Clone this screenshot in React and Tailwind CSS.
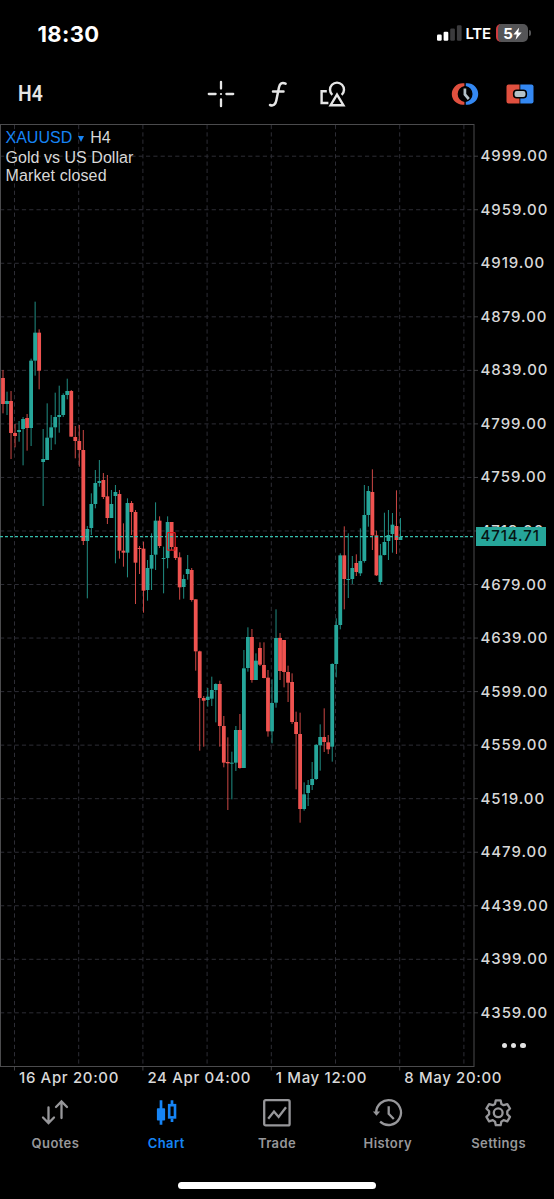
import clsx from 'clsx'

const UP = '#26a69a'
const DOWN = '#ef5350'
const STEP = 53.54

// [direction, high, body top, body bottom, low], three units per pixel below the segment top
const SEGMENTS = [
  {
    top: 290,
    bars: [
      ['d', 240, 264, 342, 370], ['u', 305, 333, 342, 375], ['d', 303, 333, 429, 507], ['d', 402, 429, 438, 472],
      ['u', 393, 420, 426, 455], ['u', 381, 387, 417, 526], ['d', 372, 384, 414, 482], ['u', 206, 212, 414, 468],
      ['u', 35, 128, 212, 257], ['d', 118, 128, 242, 298], ['u', 417, 507, 516, 648], ['u', 340, 443, 510, 510],
      ['u', 375, 412, 443, 480], ['u', 308, 381, 412, 463], ['u', 287, 375, 381, 428], ['u', 310, 315, 375, 381],
      ['u', 266, 303, 315, 328], ['d', 300, 303, 440, 440], ['d', 408, 441, 453, 505], ['d', 405, 453, 480, 530],
      ['d', 420, 480, 753, 765], ['u', 708, 717, 753, 925], ['u', 610, 642, 714, 735], ['u', 540, 579, 642, 655],
    ],
  },
  {
    top: 450,
    bars: [
      ['u', 30, 93, 99, 110], ['d', 69, 90, 141, 147], ['d', 75, 139, 204, 222], ['u', 120, 162, 204, 204],
      ['u', 105, 126, 138, 340], ['d', 120, 132, 302, 326], ['d', 220, 302, 308, 350], ['u', 145, 159, 308, 382],
      ['d', 153, 159, 186, 255], ['d', 180, 186, 338, 462], ['d', 288, 294, 297, 372], ['d', 275, 296, 422, 488],
      ['u', 330, 354, 420, 452], ['u', 250, 315, 356, 420], ['u', 157, 212, 314, 360], ['d', 199, 212, 288, 294],
      ['u', 290, 324, 327, 430], ['u', 199, 216, 324, 355], ['d', 216, 216, 291, 300], ['d', 290, 291, 324, 330],
      ['d', 307, 322, 412, 449], ['u', 374, 387, 411, 446], ['u', 315, 357, 372, 389], ['d', 354, 360, 450, 455],
    ],
  },
  {
    top: 490,
    bars: [
      ['d', 328, 328, 484, 542], ['d', 482, 484, 624, 782], ['d', 618, 624, 632, 770], ['u', 594, 620, 630, 650],
      ['u', 560, 600, 626, 648], ['u', 580, 582, 600, 697], ['d', 572, 582, 708, 770], ['d', 678, 708, 818, 832],
      ['d', 742, 816, 820, 960], ['u', 785, 818, 821, 928], ['u', 708, 720, 818, 843], ['d', 672, 720, 834, 836],
      ['u', 480, 535, 834, 834], ['u', 412, 441, 534, 545], ['d', 417, 441, 570, 578], ['u', 490, 512, 570, 570],
      ['d', 457, 474, 524, 528], ['d', 457, 525, 564, 565],
    ],
  },
  {
    top: 590,
    bars: [
      ['d', 240, 263, 424, 440], ['u', 268, 339, 424, 460], ['u', 58, 144, 338, 353], ['d', 129, 144, 243, 270],
      ['d', 150, 150, 246, 292], ['d', 227, 246, 278, 336], ['d', 250, 276, 396, 402], ['d', 365, 396, 432, 598],
      ['d', 368, 432, 657, 698], ['u', 577, 613, 657, 662], ['u', 570, 585, 609, 648], ['u', 516, 567, 585, 600],
      ['u', 462, 465, 567, 570], ['u', 403, 441, 466, 542], ['d', 355, 441, 456, 486], ['d', 435, 457, 478, 492],
      ['u', 220, 222, 470, 515], ['u', 85, 105, 222, 262],
    ],
  },
  {
    top: 460,
    bars: [
      ['u', 280, 286, 495, 508], ['d', 199, 286, 357, 448], ['u', 220, 357, 360, 414], ['u', 288, 324, 357, 372],
      ['d', 283, 309, 336, 348], ['u', 205, 303, 340, 348], ['u', 75, 165, 303, 308], ['u', 78, 93, 165, 200],
      ['d', 28, 96, 226, 270], ['d', 212, 226, 346, 348], ['u', 252, 286, 366, 374], ['u', 158, 246, 285, 286],
      ['u', 150, 225, 243, 300], ['u', 159, 194, 222, 278], ['d', 91, 198, 240, 282], ['u', 174, 231, 240, 240],
    ],
  },
]

const CANDLES = SEGMENTS.flatMap(({ top, bars }) =>
  bars.map(([dir, ...ys]) => ({ color: dir === 'u' ? UP : DOWN, ys: ys.map(v => top + v / 3) }))
)

const PRICES = Array.from({ length: 17 }, (_, i) => (4999 - i * 40).toFixed(2))
const DATES = ['16 Apr 20:00', '24 Apr 04:00', '1 May 12:00', '8 May 20:00']

function StatusBar() {
  return (
    <div className="flex h-[66px] shrink-0 items-center justify-between pl-[37.5px] pr-[23px]">
      <span className="pt-[2px] text-[22px] font-bold leading-none tracking-[0.35px]">18:30</span>
      <div className="flex items-center">
        <svg width="26" height="16" viewBox="0 0 26 16">
          <rect x="0" y="9.5" width="4.7" height="6.3" rx="1.2" fill="#fff" />
          <rect x="6.6" y="6.8" width="4.7" height="9" rx="1.2" fill="#fff" />
          <rect x="13.2" y="3.6" width="4.7" height="12.2" rx="1.2" fill="#3b3b3d" />
          <rect x="19.9" y="0.3" width="4.7" height="15.5" rx="1.2" fill="#3b3b3d" />
        </svg>
        <span className="ml-[3px] w-[26px] pt-[1px] text-[15px] font-semibold leading-none tracking-[-0.3px]">LTE</span>
        <div className="ml-[4px] flex h-[18px] w-[32px] items-center justify-center overflow-hidden rounded-[5px] border-l-2 border-[#d03a3e] bg-[#555557]">
          <span className="text-[15px] font-bold leading-none">5</span>
          <svg width="9" height="13" viewBox="0 0 9 13">
            <path d="M6.2 0.5 0.4 7.4H3.8L2.6 12.7 8.7 5.4H5.2z" fill="#fff" />
          </svg>
        </div>
        <div className="ml-[1.5px] h-[6px] w-[2px] rounded-r bg-[#555557]" />
      </div>
    </div>
  )
}

function Toolbar() {
  return (
    <div className="flex h-[58px] shrink-0 items-center pb-[3px] pl-[18px] pr-[20px] text-[#e6e6e6]">
      <span className="w-[189px] origin-left scale-x-[0.86] font-[Roboto] text-[22.5px] font-semibold leading-none">H4</span>
      <svg className="shrink-0" width="28" height="28" viewBox="0 0 28 28" stroke="currentColor" strokeWidth="2.3" strokeLinecap="round">
        <path d="M1.8 14H8.6M19.4 14H26.2M14 1.8V8.6M14 19.4V26.2" />
        <path d="M14 14h0.01" strokeWidth="2.2" />
      </svg>
      <svg className="ml-[32.5px] shrink-0" width="20" height="28" viewBox="0 0 20 28" fill="none" stroke="currentColor" strokeWidth="2.5" strokeLinecap="round">
        <path d="M17.6 3.6C14.2 2 11.8 3.2 11 7.2L8.3 20.5C7.5 24.8 5.2 26.2 2 25M5 11.5H15.5" />
      </svg>
      <svg className="ml-[31px] shrink-0" width="28" height="28" viewBox="0 0 28 28" fill="none" stroke="currentColor" strokeWidth="2.4">
        <path d="M13.3 14.8A7 7 0 1 1 22.7 14.8" />
        <path d="M18 14.6 24.4 25.2H11.6Z" />
        <path d="M7.8 11.2H2.6V23H9.4" />
      </svg>
      <svg className="ml-auto shrink-0" width="28" height="24" viewBox="0 0 28 24">
        <path d="M13.4 1.3H11.5A10.7 10.7 0 0 0 11.5 22.7H13.4V19.9A8 8 0 0 1 13.4 4.1Z" fill="#e0503f" />
        <path d="M14.8 1.3H16.5A10.7 10.7 0 0 1 16.5 22.7H14.8V19.9A8 8 0 0 0 14.8 4.1Z" fill="#3488f2" />
        <path d="M13.9 6.5V12.5L17.8 17" fill="none" stroke="#b4c2c8" strokeWidth="2.7" />
      </svg>
      <svg className="ml-[27px] shrink-0" width="28" height="20" viewBox="0 0 28 20">
        <path d="M13.5 0.5H2.5A2 2 0 0 0 .5 2.5V17.5A2 2 0 0 0 2.5 19.5H13.5Z" fill="#e0503f" />
        <path d="M14.3 0.5H25.5A2 2 0 0 1 27.5 2.5V17.5A2 2 0 0 1 25.5 19.5H14.3Z" fill="#3488f2" />
        <rect x="7.7" y="6.2" width="12.6" height="7.6" rx="3" fill="#b4c2c8" stroke="#000" strokeWidth="1.6" />
      </svg>
    </div>
  )
}

function Plot() {
  return (
    <svg className="block shrink-0" width="478" height="948" viewBox="0 124 478 948">
      <g stroke="#2d2d35" strokeWidth="1" strokeDasharray="4.2 3.1">
        {PRICES.map((p, i) => (
          <line key={p} x1="0" x2="474" y1={156.2 + i * STEP} y2={156.2 + i * STEP} />
        ))}
        {Array.from({ length: 8 }, (_, i) => (
          <line key={i} x1={14.5 + i * 64.2} x2={14.5 + i * 64.2} y1="125" y2="1066" />
        ))}
      </g>
      <g stroke="#3f3f42">
        {PRICES.map((p, i) => (
          <line key={p} x1="474" x2="478" y1={156.2 + i * STEP} y2={156.2 + i * STEP} />
        ))}
        {DATES.map((d, i) => (
          <line key={d} x1={14.5 + i * 128.4} x2={14.5 + i * 128.4} y1="1066" y2="1070.5" />
        ))}
        <rect x="0.5" y="124.5" width="473.5" height="942" fill="none" stroke="#4b4b4d" />
      </g>
      {CANDLES.map(({ color, ys: [high, top, bottom, low] }, i) => (
        <g key={i} fill={color}>
          <rect x={2.5 + i * 4.015} y={high} width="1" height={low - high} opacity="0.85" />
          <rect x={1.1 + i * 4.015} y={top} width="3.8" height={Math.max(bottom - top, 1)} />
        </g>
      ))}
      <line x1="0" x2="474" y1="536.6" y2="536.6" stroke="#35bfae" strokeWidth="1.3" strokeDasharray="3 2" />
      <rect x="167.4" y="532.6" width="7.8" height="17.6" rx="0.8" fill="none" stroke="#dc1a1f" strokeWidth="1.2" />
    </svg>
  )
}

function Chart() {
  return (
    <div className="relative flex h-[942px] shrink-0">
      <Plot />
      <div className="flex flex-1 flex-col pt-[5px] pl-[2.5px] text-[15px] font-medium tracking-[0.95px] text-[#d8d8d8]">
        {PRICES.map(p => (
          <div key={p} className="flex h-[53.54px] shrink-0 items-center leading-none">{p}</div>
        ))}
      </div>
      <div className="absolute left-[5.5px] top-[3px] font-['Liberation_Sans',sans-serif] text-base text-[#d8d8d8]">
        <div className="flex h-[22px] items-center">
          <span className="text-[#1684f5]">XAUUSD</span>
          <svg className="ml-[6px] mt-[2px]" width="6" height="6" viewBox="0 0 6 6">
            <path d="M0 0H6L3 6Z" fill="#1684f5" />
          </svg>
          <span className="ml-[6px]">H4</span>
        </div>
        <div className="h-[18px] leading-[18px] tracking-[0.04px]">Gold vs US Dollar</div>
        <div className="h-[18px] leading-[18px] tracking-[0.12px]">Market closed</div>
      </div>
      <div className="absolute left-[476px] top-[403px] flex h-[19px] w-[70px] items-center bg-[#26a69a] pl-[4.5px] text-[15px] font-medium tracking-[0.9px] text-[#061513]">
        4714.71
      </div>
      <div className="absolute left-[501.5px] top-[918.5px] flex gap-[4px]">
        {[0, 1, 2].map(i => (
          <span key={i} className="size-[5.4px] rounded-full bg-[#e2e2e2]" />
        ))}
      </div>
    </div>
  )
}

function QuotesIcon() {
  return (
    <path d="M7.5 8.5V23.5M2 18.5 7.5 24 13 18.5M20.5 19V3M15 8 20.5 2.5 26 8" strokeLinecap="round" />
  )
}

function ChartIcon() {
  return (
    <>
      <path d="M9 1.3V25.7M20 1.3V5.5M20 19.5V23" strokeWidth="2.7" />
      <rect x="4.9" y="9.3" width="8.2" height="12.2" rx="0.8" fill="currentColor" stroke="none" />
      <rect x="17.2" y="6.2" width="5.8" height="12.2" strokeWidth="2.6" />
    </>
  )
}

function TradeIcon() {
  return (
    <>
      <rect x="1.2" y="1.2" width="25.4" height="25.2" rx="1.5" />
      <path d="M5.2 19.8 11 12.6 15.6 18 23 8.2" />
    </>
  )
}

function HistoryIcon() {
  return (
    <>
      <path d="M2.2 14A12.4 12.4 0 1 1 6.1 22.6" />
      <path d="M-1.1 12.6H6.1L2.5 16.8Z" fill="currentColor" stroke="none" />
      <path d="M14.7 7.2V14.8L19.8 20" />
    </>
  )
}

function SettingsIcon() {
  return (
    <>
      <path
        d="M10.8 1.3H15.6L16.4 5 18.6 6.2 22.3 5.1 25 9.5 22.3 12.2V15.2L25 17.9 22.3 22.3 18.6 21.2 16.4 22.6 15.6 26.2H10.8L10 22.6 7.8 21.2 4.1 22.3 1.4 17.9 4.1 15.2V12.2L1.4 9.5 4.1 5.1 7.8 6.2 10 5Z"
        strokeLinejoin="round"
      />
      <circle cx="13.2" cy="13.8" r="4.4" />
    </>
  )
}

const TABS = [
  { label: 'Quotes', Icon: QuotesIcon },
  { label: 'Chart', Icon: ChartIcon, active: true },
  { label: 'Trade', Icon: TradeIcon },
  { label: 'History', Icon: HistoryIcon },
  { label: 'Settings', Icon: SettingsIcon },
]

function TabBar() {
  return (
    <nav className="flex h-[76px] shrink-0">
      {TABS.map(({ label, Icon, active }) => (
        <button
          key={label}
          className={clsx('flex flex-1 basis-0 flex-col items-center pt-[7px]', active ? 'text-[#1684f5]' : 'text-[#97979a]')}
        >
          <svg className="overflow-visible" width="28" height="28" viewBox="0 0 28 28" fill="none" stroke="currentColor" strokeWidth="2.3">
            <Icon />
          </svg>
          <span className="mt-[8px] text-[13px] font-semibold leading-[16px] tracking-[0.4px]">{label}</span>
        </button>
      ))}
    </nav>
  )
}

export default function App() {
  return (
    <div className="flex h-[1199px] w-[554px] flex-col overflow-hidden bg-black font-[Inter,sans-serif] text-white">
      <StatusBar />
      <Toolbar />
      <Chart />
      <div className="flex h-[26px] shrink-0 items-center pb-[3px] pl-[19px] text-[15px] font-medium tracking-[0.65px] text-[#d8d8d8]">
        {DATES.map(d => (
          <span key={d} className="w-[128.4px] shrink-0 whitespace-nowrap leading-none">{d}</span>
        ))}
      </div>
      <TabBar />
      <div className="mx-auto mt-[13.5px] h-[7px] w-[198px] rounded-full bg-white" />
    </div>
  )
}
